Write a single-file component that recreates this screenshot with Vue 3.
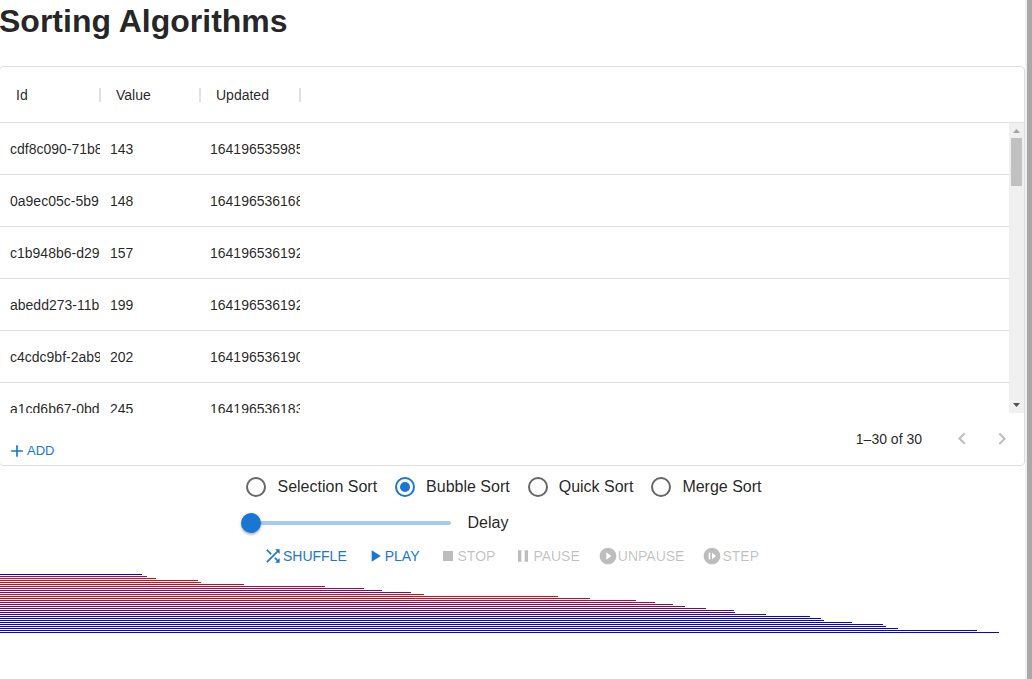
<script setup>
import { ref } from 'vue'

const rows = [
  { id: 'cdf8c090-71b8', value: 143, updated: '164196535985' },
  { id: '0a9ec05c-5b9', value: 148, updated: '164196536168' },
  { id: 'c1b948b6-d29', value: 157, updated: '164196536192' },
  { id: 'abedd273-11b', value: 199, updated: '164196536192' },
  { id: 'c4cdc9bf-2ab9', value: 202, updated: '164196536190' },
  { id: 'a1cd6b67-0bd', value: 245, updated: '164196536183' },
]

const algorithms = ['Selection Sort', 'Bubble Sort', 'Quick Sort', 'Merge Sort']
const algorithm = ref('Bubble Sort')
const delay = ref(0)

const bars = [
  [143, '#0000ff'], [148, '#bf0040'], [157, '#ff0000'], [199, '#f2000d'], [202, '#ff0000'],
  [245, '#d9001a'], [326, '#cc0033'], [365, '#bf0040'], [383, '#99005c'], [412, '#8c0073'],
  [425, '#ff0000'], [559, '#f2000d'], [591, '#e6001a'], [637, '#cc0033'], [656, '#bf0040'],
  [674, '#a60059'], [686, '#8c0073'], [707, '#800080'], [735, '#6600a0'], [736, '#5000b0'],
  [767, '#3300cc'], [811, '#0000ff'], [822, '#0000ff'], [825, '#0000ff'], [853, '#0000ff'],
  [884, '#0000ff'], [887, '#0000ff'], [899, '#0000ff'], [978, '#0000ff'], [1000, '#0000ff'],
]

const actions = [
  { name: 'Shuffle', path: 'M10.59 9.17 5.41 4 4 5.41l5.17 5.17 1.42-1.41zM14.5 4l2.04 2.04L4 18.59 5.41 20 17.96 7.46 20 9.5V4h-5.5zm.33 9.41-1.41 1.41 3.13 3.13L14.5 20H20v-5.5l-2.04 2.04-3.13-3.13z' },
  { name: 'Play', path: 'M8 5v14l11-7z' },
  { name: 'Stop', path: 'M6 6h12v12H6z', disabled: true },
  { name: 'Pause', path: 'M6 19h4V5H6v14zm8-14v14h4V5h-4z', disabled: true },
  { name: 'Unpause', path: 'M12 2C6.48 2 2 6.48 2 12s4.48 10 10 10 10-4.48 10-10S17.52 2 12 2zm-2 14.5v-9l6 4.5-6 4.5z', disabled: true },
  { name: 'Step', path: 'M12 2C6.48 2 2 6.48 2 12s4.48 10 10 10 10-4.48 10-10S17.52 2 12 2zM10 16H8V8h2v8zm2 0V8l5 4-5 4z', disabled: true },
]
</script>

<template>
  <div class="page">
    <main class="content">
      <h1>Sorting Algorithms</h1>

      <section class="grid">
        <table>
          <thead>
            <tr>
              <th scope="col">Id</th>
              <th scope="col">Value</th>
              <th scope="col">Updated</th>
            </tr>
          </thead>
          <tbody>
            <tr v-for="row in rows" :key="row.id">
              <td>{{ row.id }}</td>
              <td>{{ row.value }}</td>
              <td>{{ row.updated }}</td>
            </tr>
          </tbody>
        </table>
        <div class="scrollbar" aria-hidden="true">
          <svg class="arrow" viewBox="0 0 15 15"><path d="M4 10h7L7.5 6z" fill="#a3a3a3" /></svg>
          <div class="scroll-thumb"></div>
          <svg class="arrow" viewBox="0 0 15 15"><path d="M4 5h7L7.5 9z" fill="#505050" /></svg>
        </div>
        <footer>
          <button class="add" type="button">
            <svg viewBox="0 0 24 24"><path d="M19 13h-6v6h-2v-6H5v-2h6V5h2v6h6v2z" /></svg>ADD
          </button>
          <div class="pagination">
            <span class="range">1–30 of 30</span>
            <button type="button" disabled aria-label="Previous page">
              <svg viewBox="0 0 24 24"><path d="M15.41 16.09l-4.58-4.59 4.58-4.59L14 5.5l-6 6 6 6z" /></svg>
            </button>
            <button type="button" disabled aria-label="Next page">
              <svg viewBox="0 0 24 24"><path d="M8.59 16.34l4.58-4.59-4.58-4.59L10 5.75l6 6-6 6z" /></svg>
            </button>
          </div>
        </footer>
      </section>

      <section class="controls">
        <div class="radios" role="radiogroup" aria-label="Algorithm">
          <label v-for="name in algorithms" :key="name">
            <input v-model="algorithm" type="radio" name="algorithm" :value="name" />
            <span>{{ name }}</span>
          </label>
        </div>
        <div class="delay">
          <div class="slider">
            <input id="delay" v-model="delay" type="range" min="0" max="100" />
          </div>
          <label for="delay">Delay</label>
        </div>
        <div class="actions">
          <button v-for="action in actions" :key="action.name" type="button" :disabled="action.disabled">
            <svg viewBox="0 0 24 24"><path :d="action.path" /></svg>{{ action.name }}
          </button>
        </div>
      </section>

      <div class="bars">
        <div v-for="([value, color], i) in bars" :key="i" class="bar" :style="{ width: value + 'px', background: color }"></div>
      </div>
    </main>
    <div class="page-scroll" aria-hidden="true"></div>
  </div>
</template>

<style>
body {
  margin: 0;
  background: #fff;
}
</style>

<style scoped>
.page {
  display: flex;
  min-height: 100vh;
  overflow: hidden;
  font-family: "Liberation Sans", Arial, sans-serif;
  font-size: 16px;
  color: rgba(0, 0, 0, 0.87);
}
.content {
  flex: 1;
  min-width: 0;
  margin-left: -1px;
}
.page-scroll {
  width: 5px;
  background: #a8a8a8;
  border-left: 2px solid #f0f0f0;
}
h1 {
  margin: 0 0 24px;
  font-size: 32px;
  line-height: 42px;
  font-weight: 700;
}
.grid {
  position: relative;
  border: 1px solid #e0e0e0;
  border-radius: 4px;
  font-size: 14px;
}
table,
thead,
tbody {
  display: block;
}
tr {
  display: flex;
  box-sizing: border-box;
  border-bottom: 1px solid #e0e0e0;
}
thead tr {
  height: 56px;
}
th {
  position: relative;
  box-sizing: border-box;
  width: 100px;
  padding: 0 0 0 16px;
  line-height: 56px;
  font-weight: 400;
  text-align: left;
}
th::after {
  content: "";
  position: absolute;
  top: 21px;
  right: -1px;
  width: 2px;
  height: 14px;
  background: #e0e0e0;
}
tbody {
  height: 290px;
  margin-right: 15px;
  overflow: hidden;
}
tbody tr {
  height: 52px;
}
td {
  box-sizing: border-box;
  width: 100px;
  padding: 0 0 0 10px;
  line-height: 52px;
  white-space: nowrap;
  overflow: hidden;
}
.scrollbar {
  position: absolute;
  top: 56px;
  right: 0;
  display: flex;
  flex-direction: column;
  align-items: center;
  width: 15px;
  height: 290px;
  background: #f0f0f0;
}
.arrow {
  width: 15px;
  height: 15px;
}
.scroll-thumb {
  width: 11px;
  height: 48px;
  margin-bottom: auto;
  background: #c1c1c1;
}
footer {
  display: flex;
  align-items: center;
  justify-content: space-between;
  height: 52px;
}
button {
  display: flex;
  align-items: center;
  border: 0;
  background: none;
  color: #1976d2;
  font-family: inherit;
  text-transform: uppercase;
}
button:disabled {
  color: rgba(0, 0, 0, 0.26);
}
svg {
  fill: currentColor;
}
.add {
  align-self: flex-end;
  padding: 4px 7px;
  font-size: 13px;
  line-height: 20px;
}
.add svg,
.actions svg {
  width: 20px;
  height: 20px;
}
.pagination {
  display: flex;
  align-items: center;
  padding-right: 2px;
}
.range {
  margin-right: 20px;
}
.pagination button {
  padding: 8px;
}
.pagination svg {
  width: 24px;
  height: 24px;
}
.controls {
  width: fit-content;
  margin: 0 auto;
}
.radios {
  display: flex;
  gap: 18px;
  padding-right: 16px;
}
.radios label {
  display: flex;
  align-items: center;
  gap: 11px;
  height: 42px;
}
.radios input {
  appearance: none;
  width: 20px;
  height: 20px;
  margin: 0;
  border: 2px solid rgba(0, 0, 0, 0.6);
  border-radius: 50%;
}
.radios input:checked {
  padding: 3px;
  border-color: #1976d2;
  background: #1976d2 content-box;
}
.delay {
  display: flex;
  align-items: center;
  gap: 16px;
  height: 30px;
  margin-left: 5px;
}
.slider {
  position: relative;
  width: 200px;
  height: 20px;
}
.slider::before {
  content: "";
  position: absolute;
  inset: 8px 0;
  border-radius: 2px;
  background: #a7caed;
}
.slider input {
  position: relative;
  appearance: none;
  display: block;
  width: 220px;
  height: 20px;
  margin: 0 -10px;
  background: none;
}
.slider input::-webkit-slider-thumb {
  appearance: none;
  width: 20px;
  height: 20px;
  border-radius: 50%;
  background: #1976d2;
  box-shadow: 0 2px 2px rgba(0, 0, 0, 0.2), 0 1px 4px rgba(0, 0, 0, 0.14);
}
.actions {
  display: flex;
  justify-content: center;
  gap: 2px;
  padding-right: 2px;
}
.actions button {
  padding: 6px 8px;
  font-size: 14px;
  line-height: 24px;
}
.bars {
  overflow: hidden;
}
.bar {
  height: 1px;
  margin-bottom: 1px;
}
</style>
